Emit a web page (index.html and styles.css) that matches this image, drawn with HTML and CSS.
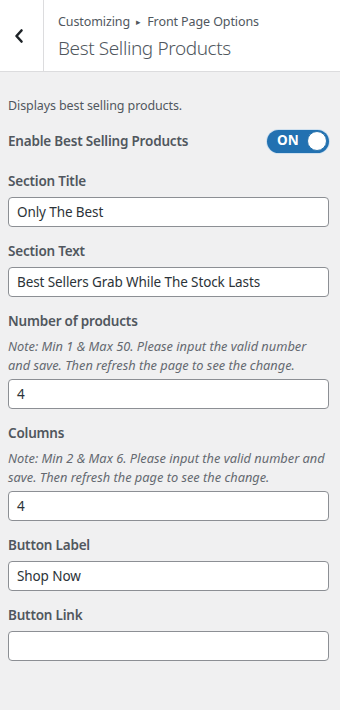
FILE: index.html
```html
<!DOCTYPE html>
<html lang="en">
<head>
<meta charset="utf-8">
<title>Best Selling Products</title>
<link rel="stylesheet" href="styles.css">
</head>
<body>
<div class="panel">
  <header class="head">
    <div class="back">
      <svg width="12" height="16" viewBox="0 0 12 16"><polyline points="8.5,2.5 3.5,8 8.5,13.5" fill="none" stroke="#1d2327" stroke-width="2.6" stroke-linecap="round" stroke-linejoin="round"/></svg>
    </div>
    <div class="titles">
      <div class="crumb">Customizing <span class="tri">▸</span> Front Page Options</div>
      <div class="title">Best Selling Products</div>
    </div>
  </header>
  <main class="content">
    <p class="desc">Displays best selling products.</p>
    <div class="toggle-row">
      <span class="label">Enable Best Selling Products</span>
      <span class="toggle"><span class="on">ON</span><span class="knob"></span></span>
    </div>
    <div class="control">
      <label class="label">Section Title</label>
      <div class="input">Only The Best</div>
    </div>
    <div class="control">
      <label class="label">Section Text</label>
      <div class="input">Best Sellers Grab While The Stock Lasts</div>
    </div>
    <div class="control">
      <label class="label">Number of products</label>
      <p class="note">Note: Min 1 &amp; Max 50. Please input the valid number and save. Then refresh the page to see the change.</p>
      <div class="input">4</div>
    </div>
    <div class="control">
      <label class="label">Columns</label>
      <p class="note">Note: Min 2 &amp; Max 6. Please input the valid number and save. Then refresh the page to see the change.</p>
      <div class="input">4</div>
    </div>
    <div class="control">
      <label class="label">Button Label</label>
      <div class="input">Shop Now</div>
    </div>
    <div class="control">
      <label class="label">Button Link</label>
      <div class="input"></div>
    </div>
  </main>
</div>
</body>
</html>
```
FILE: styles.css
```css
* { box-sizing: border-box; }
html, body { margin: 0; padding: 0; }
body {
  width: 340px;
  height: 710px;
  background: #f0f0f1;
  font-family: "Noto Sans", "Open Sans", sans-serif;
  color: #50575e;
  overflow: hidden;
}
.head {
  display: flex;
  height: 72px;
  background: #fff;
  border-bottom: 1px solid #dcdcde;
}
.back {
  width: 44px;
  border-right: 1px solid #dcdcde;
  display: flex;
  align-items: center;
  justify-content: center;
  padding-right: 6px;
}
.titles {
  padding: 12px 0 0 14px;
  display: flex;
  flex-direction: column;
}
.crumb {
  font-size: 12.5px;
  line-height: 20px;
  color: #50575e;
  letter-spacing: -0.1px;
}
.tri { font-size: 9px; margin: 0 3px; position: relative; top: -1px; }
.title {
  font-size: 19px;
  font-weight: 300;
  line-height: 30px;
  color: #50575e;
  letter-spacing: -0.4px;
}
.content {
  padding: 24px 11px 0 8px;
}
.desc {
  margin: 0;
  font-size: 12.5px;
  line-height: 19px;
  color: #50575e;
  letter-spacing: -0.1px;
}
.toggle-row {
  display: flex;
  justify-content: space-between;
  align-items: center;
  margin-top: 14px;
  height: 24px;
}
.label {
  display: block;
  font-size: 13.5px;
  font-weight: 600;
  line-height: 20px;
  color: #50575e;
  letter-spacing: -0.2px;
}
.toggle {
  display: flex;
  align-items: center;
  justify-content: space-between;
  width: 62px;
  height: 23px;
  border-radius: 12px;
  background: #2271b1;
  padding: 0 2px 0 10px;
  box-shadow: 0 0 0 1px #cfe0ef;
}
.on {
  color: #fff;
  font-weight: 700;
  font-size: 13.5px;
  line-height: 1;
}
.knob {
  width: 20px;
  height: 20px;
  border-radius: 50%;
  background: #fff;
  border: 1px solid #2a74ad;
}
.control {
  margin-top: 18px;
}
.control + .control { margin-top: 14px; }
.control .label { margin-bottom: 6px; }
.note {
  margin: 0 -1px 4px 0;
  font-size: 12.8px;
  line-height: 19px;
  font-style: italic;
  color: #646970;
}
.input {
  height: 30px;
  background: #fff;
  border: 1px solid #8c8f94;
  border-radius: 4px;
  padding: 0 8px;
  font-size: 13.5px;
  line-height: 28px;
  color: #2c3338;
  letter-spacing: -0.1px;
}
```
